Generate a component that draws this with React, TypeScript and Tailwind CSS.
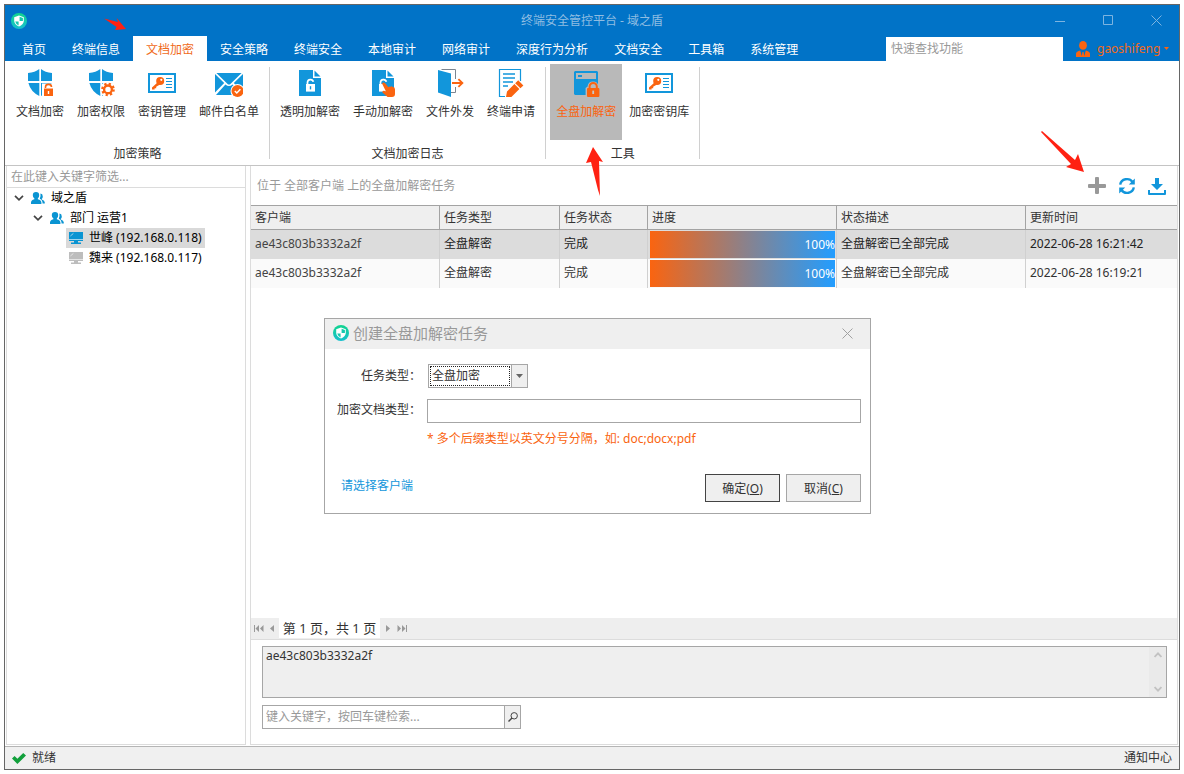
import type { ReactNode } from "react";

const BLUE = "#1296db";
const ORANGE = "#fa6410";

const tabs = ["首页", "终端信息", "文档加密", "安全策略", "终端安全", "本地审计", "网络审计", "深度行为分析", "文档安全", "工具箱", "系统管理"];

const rows = [
  { client: "ae43c803b3332a2f", type: "全盘解密", state: "完成", progress: 100, desc: "全盘解密已全部完成", time: "2022-06-28 16:21:42" },
  { client: "ae43c803b3332a2f", type: "全盘解密", state: "完成", progress: 100, desc: "全盘解密已全部完成", time: "2022-06-28 16:19:21" },
];

function Logo() {
  return (
    <svg width="16" height="16" viewBox="0 0 16 16" className="shrink-0" aria-hidden="true">
      <defs>
        <linearGradient id="logo" x1="0" y1="0" x2="0" y2="1">
          <stop offset="0" stopColor="#12d48e" />
          <stop offset="1" stopColor="#16bfce" />
        </linearGradient>
      </defs>
      <circle cx="8" cy="8" r="8" fill="url(#logo)" />
      <path d="M8 2.6 L12.8 4.2 V8 Q12.4 11.8 8 13.6 Q3.6 11.8 3.2 8 V4.2Z" fill="#fff" />
      <path d="M8.6 3.8 L11.9 5 V8 H8.6Z M7.6 8.4 H4.2 Q4.8 11 7.6 12.4Z" fill="#14c9ae" />
    </svg>
  );
}

function RibbonIcon({ children }: { children: ReactNode }) {
  return (
    <svg width="28" height="28" viewBox="0 0 28 28" fill="none" className="shrink-0" aria-hidden="true">
      {children}
    </svg>
  );
}

function Shield() {
  return (
    <path
      d="M2 4 Q9 3.6 13.3 0 V12 H2Z M15 0 Q19 3.6 26 4 V12 H15Z M2.4 14 H13.3 V27 Q4.5 22.5 2.4 14Z M15 14 H25.6 Q23.5 22.5 15 27Z"
      fill={BLUE}
    />
  );
}

function DocShape() {
  return (
    <>
      <path d="M3 1 H17 V9 H25 V27 H3Z" fill={BLUE} />
      <path d="M18.5 1.5 L24.5 7.5 H18.5Z" fill={BLUE} />
    </>
  );
}

const shieldLock = (
  <RibbonIcon>
    <Shield />
    <path d="M16 14.5 H28 V28 H16Z" fill="#fff" />
    <path d="M19.5 19 V18 A3 2.6 0 0 1 25.5 18" stroke={ORANGE} strokeWidth="1.6" />
    <path d="M18 19.5 H27 V27 H18Z" fill={ORANGE} />
    <path d="M22.5 22 V25" stroke="#fff" strokeWidth="1.4" />
  </RibbonIcon>
);

const shieldGear = (
  <RibbonIcon>
    <Shield />
    <circle cx="21" cy="20.4" r="8" fill="#fff" />
    <circle cx="21" cy="20.4" r="5.6" stroke={ORANGE} strokeWidth="2.4" strokeDasharray="2.2 2.198" />
    <circle cx="21" cy="20.4" r="3.9" stroke={ORANGE} strokeWidth="2.4" />
  </RibbonIcon>
);

const keyCard = (
  <RibbonIcon>
    <rect x="1" y="5" width="26" height="18" fill="#fff" stroke={BLUE} strokeWidth="2" />
    <path d="M10 13 L4 18.4 V20.6 H6.6 V19.2 H8.2 V17.8 L12 15.6Z" fill={ORANGE} />
    <circle cx="12.2" cy="12" r="4" fill={ORANGE} />
    <circle cx="13.3" cy="10.8" r="1.1" fill="#fff" />
    <path d="M18 9.5 H24 M18 12.5 H24 M18 15.5 H24 M18 18.5 H24" stroke={BLUE} />
  </RibbonIcon>
);

const mailCheck = (
  <RibbonIcon>
    <path d="M1.4 4 H26.6 L15.4 15 Q14 16.2 12.6 15Z M0 5 L9.2 14 L0 23.6Z M28 5 L18.8 14 L28 23.6Z M10.4 15.4 Q14 18.8 17.6 15.4 L27 26 H1Z" fill={BLUE} />
    <circle cx="22.5" cy="22" r="7" fill="#fff" />
    <circle cx="22.5" cy="22" r="6" fill={ORANGE} />
    <path d="M19.8 22 L21.8 24 L25.4 20.2" stroke="#fff" strokeWidth="1.5" />
  </RibbonIcon>
);

const docLock = (
  <RibbonIcon>
    <DocShape />
    <path d="M11.5 15 V13.4 A3 3 0 0 1 17.4 12.8" stroke="#fff" strokeWidth="1.7" />
    <path d="M10 15 H19 V22.6 H10Z" fill="#fff" />
    <path d="M14.5 17.2 V20.4" stroke={BLUE} strokeWidth="1.4" />
  </RibbonIcon>
);

const docHand = (
  <RibbonIcon>
    <DocShape />
    <path d="M11.5 15 V13.4 A3 3 0 0 1 17.4 12.8" stroke="#fff" strokeWidth="1.7" />
    <path d="M10 15 H17 V22.6 H10Z" fill="#fff" />
    <path d="M13 14.4 Q14.6 12.4 16.4 14.6 L19.4 18.2 Q20.4 16.8 21.6 17.8 Q22.6 16.8 23.8 18 Q26 18 26 20.4 V25 Q26 28 23 28 H18.6 L13.4 23.4 Q13 21.6 15 21.8 L17 22.4Z" fill={ORANGE} />
  </RibbonIcon>
);

const doorOut = (
  <RibbonIcon>
    <path d="M5.5 0.5 H19.5 V10 M19.5 18 V23.5 H15" stroke="#7c8590" />
    <path d="M2 1 L15 4.4 V28 L2 23.4Z" fill={BLUE} />
    <path d="M16 14 H26 M22.4 10.2 L26.4 14 L22.4 17.8" stroke={ORANGE} strokeWidth="1.8" />
  </RibbonIcon>
);

const formPen = (
  <RibbonIcon>
    <path d="M23.5 12 V0.5 H2.5 V27.5 H8" stroke={BLUE} strokeWidth="1.2" />
    <path d="M6 5 H18 M6 9 H18 M6 13 H16 M6 17 H11" stroke={BLUE} strokeWidth="1.7" />
    <path d="M9 28 L10 22.4 L17.4 15 L22.4 20 L14.4 28Z M18.2 14.2 L21.2 11.2 L26.4 16.4 L23.4 19.2Z" fill={ORANGE} />
  </RibbonIcon>
);

const diskLock = (
  <RibbonIcon>
    <path d="M3 2 H25 L26 3 V26 H3 L2 25 V3Z" fill={BLUE} />
    <path d="M4 4 H24 V10 H4Z" fill="#b9b9b9" />
    <path d="M6 7 H10" stroke={BLUE} strokeWidth="2" />
    <path d="M13.6 28 V19 L15.6 17.6 Q16 12.4 21 12.4 Q26 12.4 26.6 17.6 L28 18.4 V28Z" fill="#b9b9b9" />
    <path d="M17.6 20 V17.6 A3.6 3.6 0 0 1 24.8 17.6 V20" stroke={ORANGE} strokeWidth="2" />
    <rect x="15" y="19" width="12.4" height="9" rx="1" fill={ORANGE} />
    <path d="M21.2 21.6 V25" stroke="#c9c9c9" strokeWidth="1.8" />
  </RibbonIcon>
);

const groups = [
  {
    name: "加密策略",
    items: [
      { label: "文档加密", icon: shieldLock },
      { label: "加密权限", icon: shieldGear },
      { label: "密钥管理", icon: keyCard },
      { label: "邮件白名单", icon: mailCheck },
    ],
  },
  {
    name: "文档加密日志",
    items: [
      { label: "透明加解密", icon: docLock },
      { label: "手动加解密", icon: docHand },
      { label: "文件外发", icon: doorOut },
      { label: "终端申请", icon: formPen },
    ],
  },
  {
    name: "工具",
    items: [
      { label: "全盘加解密", icon: diskLock, active: true },
      { label: "加密密钥库", icon: keyCard },
    ],
  },
];

function TitleBar() {
  return (
    <header className="bg-[#0173c7] text-white">
      <div className="relative flex h-[31px] items-center justify-between pl-[6px]">
        <Logo />
        <h1 className="absolute inset-x-0 text-center text-[#8fbde2] pointer-events-none">终端安全管控平台 - 域之盾</h1>
        <div className="-mr-px flex text-[#7db4e0]">
          <button aria-label="最小化" className="flex h-[31px] w-12 items-center justify-center">
            <svg width="11" height="11" viewBox="0 0 11 11" stroke="currentColor"><path d="M0 6.5 H10" /></svg>
          </button>
          <button aria-label="最大化" className="flex h-[31px] w-12 items-center justify-center">
            <svg width="11" height="11" viewBox="0 0 11 11" stroke="currentColor" fill="none"><path d="M0.5 0.5 H9.5 V9.5 H0.5Z" /></svg>
          </button>
          <button aria-label="关闭" className="flex h-[31px] w-12 items-center justify-center">
            <svg width="11" height="11" viewBox="0 0 11 11" stroke="currentColor"><path d="M0.5 0.5 L10.5 10.5 M10.5 0.5 L0.5 10.5" /></svg>
          </button>
        </div>
      </div>

      <div className="flex h-[25px] items-stretch">
        <nav className="flex pl-1">
          {tabs.map((tab) =>
            tab === "文档加密" ? (
              <button key={tab} className="relative bg-white px-[13px] pt-[2px] text-[#f06a1a]">
                {tab}
                <svg width="24" height="14" viewBox="0 0 24 14" className="absolute -top-[19px] -left-[29px] pointer-events-none" aria-hidden="true">
                  <path d="M0 1.4 L14 5 L12.6 1 L22 12 L11 13 L12.6 10Z" fill="#ff2112" />
                </svg>
              </button>
            ) : (
              <button key={tab} className="px-[13px] pt-[2px]">{tab}</button>
            )
          )}
        </nav>
        <input
          type="search"
          aria-label="快速查找功能"
          placeholder="快速查找功能"
          className="mt-px ml-auto w-[177px] bg-white px-[5px] text-[#333] outline-none placeholder:text-[#999]"
        />
        <button className="flex w-[116px] items-center pl-[13px] text-[#f06a1a]">
          <svg width="14" height="16" viewBox="0 0 14 16" fill={ORANGE} aria-hidden="true">
            <ellipse cx="7" cy="4.4" rx="3.9" ry="4.4" />
            <path d="M0 16 V12.4 Q0.4 10.6 4.2 9.6 L5.8 15 L6.4 11 H7.6 L8.2 15 L9.8 9.6 Q13.6 10.6 14 12.4 V16Z" />
          </svg>
          <span className="ml-[7px]">gaoshifeng</span>
          <svg width="5" height="3" viewBox="0 0 5 3" className="ml-1" fill={ORANGE} aria-hidden="true"><path d="M0 0 H5 L2.5 3Z" /></svg>
        </button>
      </div>
    </header>
  );
}

function Ribbon() {
  return (
    <div className="flex border-b border-[#c4c4c4] pl-px">
      {groups.map((group) => (
        <section key={group.name} aria-label={group.name} className="flex h-[104px]">
          <div className="flex flex-col px-1 pt-[3px]">
            <div className="flex gap-px">
              {group.items.map((item) => (
                <button
                  key={item.label}
                  className={
                    item.active
                      ? "relative flex h-[76px] flex-col items-center bg-[#b9b9b9] px-[6px] pt-[5px] text-[#fa6410]"
                      : "relative flex h-[76px] flex-col items-center px-[6px] pt-[5px]"
                  }
                >
                  {item.icon}
                  <span className="mt-[6px] leading-[18px]">{item.label}</span>
                  {item.active && (
                    <svg width="18" height="49" viewBox="0 0 18 49" className="absolute top-[83px] left-9 z-10 pointer-events-none" aria-hidden="true">
                      <path d="M7 0 L17 15 L13 14 L14 49 L12 43 L5 15 L0 16Z" fill="#ff2112" />
                    </svg>
                  )}
                </button>
              ))}
            </div>
            <p className="mt-[6px] text-center leading-4">{group.name}</p>
          </div>
          <div className="mt-[6px] mb-[6px] w-px bg-[#d0d0d0]" />
        </section>
      ))}
    </div>
  );
}

function People() {
  return (
    <svg width="14" height="12" viewBox="0 0 14 12" fill="#0a94d2" className="shrink-0" aria-hidden="true">
      <path d="M5 0 Q8.2 0 8.2 3.2 Q8.2 5.6 6.8 6.6 V7.2 Q10.4 8.2 10.4 10.4 V12 H0 V10.4 Q0 8.2 3.4 7.2 V6.6 Q1.8 5.6 1.8 3.2 Q1.8 0 5 0Z M9.4 1.6 Q11.8 1.8 11.8 4.4 Q11.8 6 10.8 6.8 V7.4 Q13.8 8.4 13.8 10.6 V11.6 H11.6 Q11.6 8 8.8 6.8 Q10 4.4 9.4 1.6Z" />
    </svg>
  );
}

function Monitor({ color }: { color: string }) {
  return (
    <svg width="14" height="12" viewBox="0 0 14 12" className="shrink-0" aria-hidden="true">
      <path d="M0 0 H14 V9 H0Z M5 9 H9 V11 H5Z M2 10.6 H12 V12 H2Z" fill={color} />
      <path d="M1.4 4 L4.4 1.4 M0 7.5 H14" stroke="#fff" strokeWidth="0.6" />
    </svg>
  );
}

function Twisty() {
  return (
    <svg width="10" height="6" viewBox="0 0 10 6" fill="none" stroke="#444" strokeWidth="1.7" className="shrink-0" aria-hidden="true">
      <path d="M1 0.8 L5 4.8 L9 0.8" />
    </svg>
  );
}

function Sidebar() {
  return (
    <aside className="flex w-60 shrink-0 flex-col border-x border-b border-[#dcdcdc]">
      <input
        type="search"
        aria-label="筛选客户端"
        placeholder="在此键入关键字筛选..."
        className="h-[22px] border-b border-[#dcdcdc] px-1 outline-none placeholder:text-[#999]"
      />
      <ul className="leading-5 text-black">
        <li>
          <div className="flex h-5 items-center pl-[7px]">
            <Twisty />
            <span className="ml-[7px] flex items-center gap-[6px]"><People />域之盾</span>
          </div>
          <ul>
            <li>
              <div className="flex h-5 items-center pl-[26px]">
                <Twisty />
                <span className="ml-[7px] flex items-center gap-[6px]"><People />部门 运营1</span>
              </div>
              <ul className="pl-[59px]">
                <li className="flex h-5 w-fit items-center gap-[6px] bg-[#d9d9d9] px-[3px]"><Monitor color="#0a94d2" />世峰 (192.168.0.118)</li>
                <li className="flex h-5 w-fit items-center gap-[6px] px-[3px]"><Monitor color="#bdbdbd" />魏来 (192.168.0.117)</li>
              </ul>
            </li>
          </ul>
        </li>
      </ul>
    </aside>
  );
}

function TaskTable() {
  const head = "h-6 border-r border-b border-[#a3a3a3] px-1 text-left font-normal last:border-r-0";
  const cell = "border-r border-[#d0d0d0] px-1 pb-[2px] last:border-r-0";
  return (
    <table className="w-full table-fixed border-separate border-spacing-0">
      <colgroup>
        <col className="w-[189px]" />
        <col className="w-[120px]" />
        <col className="w-[88px]" />
        <col className="w-[189px]" />
        <col className="w-[189px]" />
        <col />
      </colgroup>
      <thead className="bg-[#efefef]">
        <tr>
          {["客户端", "任务类型", "任务状态", "进度", "状态描述", "更新时间"].map((title) => (
            <th key={title} scope="col" className={head}>{title}</th>
          ))}
        </tr>
      </thead>
      <tbody>
        {rows.map((row, i) => (
          <tr key={row.time} className={i === 0 ? "h-[29px] bg-[#dcdcdc] text-[#222]" : "h-[29px] bg-[#fafafa]"}>
            <td className={`${cell} text-[#444]`}>{row.client}</td>
            <td className={cell}>{row.type}</td>
            <td className={cell}>{row.state}</td>
            <td className="border-r border-[#d0d0d0] pr-px pl-[2px]">
              <div
                className="h-[27px] bg-linear-to-r/srgb from-[#fa6410] to-[#229dff] text-right leading-[27px] text-white"
                style={{ width: `${row.progress}%` }}
              >
                {row.progress}%
              </div>
            </td>
            <td className={cell}>{row.desc}</td>
            <td className={cell}>{row.time}</td>
          </tr>
        ))}
      </tbody>
    </table>
  );
}

function Pager() {
  return (
    <div className="flex h-[22px] border-b border-[#dcdcdc] bg-[#eee]">
      <button aria-label="首页" className="flex items-center pl-[3px]">
        <svg width="10" height="7" viewBox="0 0 10 7" fill="#999"><path d="M0 0 H1 V7 H0Z M5 0 V7 L1.5 3.5Z M9.5 0 V7 L6 3.5Z" /></svg>
      </button>
      <button aria-label="上一页" className="flex w-[15px] items-center justify-center pl-px">
        <svg width="4" height="7" viewBox="0 0 4 7" fill="#999"><path d="M4 0 V7 L0 3.5Z" /></svg>
      </button>
      <span className="mb-px w-[101px] bg-white text-center text-[13px] leading-5">第 1 页，共 1 页</span>
      <button aria-label="下一页" className="flex w-[15px] items-center justify-center">
        <svg width="4" height="7" viewBox="0 0 4 7" fill="#999"><path d="M0 0 V7 L4 3.5Z" /></svg>
      </button>
      <button aria-label="末页" className="flex items-center pl-[2px]">
        <svg width="10" height="7" viewBox="0 0 10 7" fill="#999"><path d="M9 0 H10 V7 H9Z M0.5 0 V7 L4 3.5Z M5 0 V7 L8.5 3.5Z" /></svg>
      </button>
    </div>
  );
}

function TaskDialog() {
  return (
    <div role="dialog" aria-labelledby="dialog-title" className="absolute top-[152px] left-[73px] w-[547px] border border-[#a6a6a6] bg-white">
      <div className="flex h-[30px] items-center bg-[#efefef] pb-[2px] pl-2">
        <Logo />
        <h2 id="dialog-title" className="ml-1 text-[15px] text-[#999]">创建全盘加解密任务</h2>
        <button aria-label="关闭" className="mr-[11px] ml-auto flex size-6 items-center justify-center">
          <svg width="11" height="11" viewBox="0 0 11 11" stroke="#a0a0a0"><path d="M0.5 0.5 L10.5 10.5 M10.5 0.5 L0.5 10.5" /></svg>
        </button>
      </div>
      <form className="pt-[15px] pr-[9px] pb-[11px] pl-3">
        <div className="flex h-6 items-center">
          <label htmlFor="task-type" className="w-[84px] text-right">任务类型：</label>
          <div className="relative ml-[7px] h-6 w-[100px]">
            <select id="task-type" className="size-full appearance-none border border-[#a6a6a6] bg-white pl-[3px] outline-none">
              <option>全盘加密</option>
              <option>全盘解密</option>
            </select>
            <div className="pointer-events-none absolute inset-px flex">
              <span className="m-px flex-1 border border-dotted border-[#222]" />
              <span className="flex w-4 items-center justify-center border-l border-[#a6a6a6] bg-[#efefef]">
                <svg width="7" height="4" viewBox="0 0 7 4" fill="#666" aria-hidden="true"><path d="M0 0 H7 L3.5 4Z" /></svg>
              </span>
            </div>
          </div>
        </div>
        <div className="mt-[11px] flex h-6 items-center">
          <label htmlFor="doc-type" className="w-[84px] pb-[2px] text-right">加密文档类型：</label>
          <input id="doc-type" type="text" className="ml-[6px] h-6 flex-1 border border-[#a6a6a6] px-1 outline-none" />
        </div>
        <p className="mt-[6px] ml-[90px] leading-5 text-[#fa6410]">* 多个后缀类型以英文分号分隔，如: doc;docx;pdf</p>
        <div className="mt-[25px] flex h-7 gap-[6px]">
          <a href="#clients" className="mr-auto ml-1 leading-6 text-[#1296db]">请选择客户端</a>
          <button type="submit" className="w-[75px] border border-[#444] bg-[#efefef] pt-[2px]">确定(<u>O</u>)</button>
          <button type="button" className="w-[75px] border border-[#a6a6a6] bg-[#efefef] pt-[2px]">取消(<u>C</u>)</button>
        </div>
      </form>
    </div>
  );
}

function TaskPanel() {
  return (
    <main className="relative flex min-w-0 flex-1 flex-col border-x border-b border-[#dcdcdc]">
      <div className="flex h-10 items-center border-b border-[#a3a3a3] pr-[11px] pl-[6px]">
        <h2 className="text-[#999]">位于 全部客户端 上的全盘加解密任务</h2>
        <div className="ml-auto flex items-center gap-3">
          <button aria-label="新建任务" className="relative">
            <svg width="18" height="18" viewBox="0 0 18 18" fill="#999"><path d="M7 1 Q7 0 8 0 H10 Q11 0 11 1 V7 H17 Q18 7 18 8 V10 Q18 11 17 11 H11 V16 Q11 17 10 17 H8 Q7 17 7 16 V11 H1 Q0 11 0 10 V8 Q0 7 1 7 H7Z" /></svg>
            <svg width="43" height="41" viewBox="0 0 43 41" className="pointer-events-none absolute -top-[46px] right-[22px]" aria-hidden="true">
              <path d="M0 1 L1 0 L34 29 L37 23 L43 41 L25 36 L30 33Z" fill="#ff2112" />
            </svg>
          </button>
          <button aria-label="刷新">
            <svg width="18" height="18" viewBox="0 0 18 18" fill="none" stroke={BLUE} strokeWidth="2.4">
              <path d="M2.2 7.6 A6.8 6.4 0 0 1 14.6 5 M15.8 10.4 A6.8 6.4 0 0 1 3.4 13" />
              <path d="M16.8 1.6 V7.6 H10.8Z M1.2 16.4 V10.4 H7.2Z" fill={BLUE} stroke="none" />
            </svg>
          </button>
          <button aria-label="导出">
            <svg width="18" height="18" viewBox="0 0 18 18" fill={BLUE}><path d="M7 1 H11 V7 H15 L9 13 L3 7 H7Z M0 13 H2 V16 H16 V13 H18 V17 Q18 18 17 18 H1 Q0 18 0 17Z" /></svg>
          </button>
        </div>
      </div>
      <TaskTable />
      <div className="min-h-[230px] flex-1" />
      <Pager />
      <div className="px-[10px] pt-[6px] pb-[15px] pl-[11px]">
        <div className="flex h-[52px] border border-[#a6a6a6] bg-[#efefef]">
          <textarea readOnly aria-label="任务详情" defaultValue="ae43c803b3332a2f" className="flex-1 resize-none px-[3px] leading-[18px] outline-none" />
          <div className="flex w-[17px] flex-col items-center justify-between bg-[#eaeaea] py-[5px]" aria-hidden="true">
            <svg width="8" height="6" viewBox="0 0 8 6" fill="none" stroke="#c2c2c2" strokeWidth="1.8"><path d="M0.6 5 L4 1.4 L7.4 5" /></svg>
            <svg width="8" height="6" viewBox="0 0 8 6" fill="none" stroke="#c2c2c2" strokeWidth="1.8"><path d="M0.6 1 L4 4.6 L7.4 1" /></svg>
          </div>
        </div>
        <div className="mt-[7px] flex h-6 w-[259px] border border-[#a6a6a6]">
          <input type="search" aria-label="检索" placeholder="键入关键字，按回车键检索..." className="min-w-0 flex-1 px-[3px] outline-none placeholder:text-[#999]" />
          <button aria-label="搜索" className="flex w-4 items-center justify-center border-l border-[#a6a6a6] bg-[#efefef]">
            <svg width="10" height="10" viewBox="0 0 10 10" fill="none" stroke="#444" className="shrink-0"><circle cx="6.2" cy="3.8" r="3.2" /><path d="M4 6 L0.5 9.5" strokeWidth="1.4" /></svg>
          </button>
        </div>
      </div>
      <TaskDialog />
    </main>
  );
}

export default function App() {
  return (
    <div className="flex min-h-screen flex-col bg-white p-1 font-['Noto_Sans','Noto_Sans_CJK_SC',sans-serif] text-xs text-[#333]">
      <div className="flex flex-1 flex-col border border-[#666]">
        <TitleBar />
        <Ribbon />
        <div className="flex flex-1 gap-1 px-px pb-px">
          <Sidebar />
          <TaskPanel />
        </div>
        <footer className="flex h-[23px] items-center justify-between border-t border-[#b5b5b5] bg-[#f0f0f0] px-[7px]">
          <span className="flex items-center gap-[6px]">
            <svg width="14" height="11" viewBox="0 0 14 11" fill="#12a03c" aria-hidden="true"><path d="M0 5.6 L2.6 3 L5.4 5.8 L11.2 0 L14 2.4 L5.4 11Z" /></svg>
            就绪
          </span>
          <button>通知中心</button>
        </footer>
      </div>
    </div>
  );
}
